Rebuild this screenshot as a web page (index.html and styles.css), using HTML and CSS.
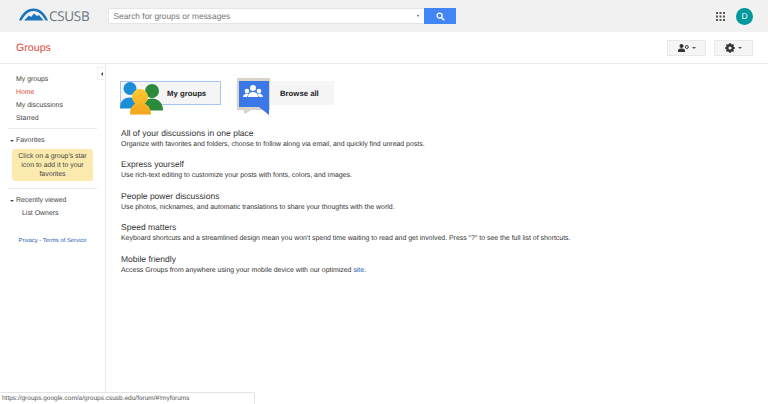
FILE: index.html
```html
<!DOCTYPE html>
<html lang="en">
<head>
    <meta charset="UTF-8">
    <title>Groups</title>
    <link rel="stylesheet" href="styles.css">
</head>
<body>
<div class="topbar">
    <div class="logo">
        <svg class="logo-mark" width="29" height="13" viewBox="0 0 29 13">
            <path d="M0 12.500C3 5 8 0.500 14.500 0.500S26 5 29 12.500h-2.500C23.500 7 19.500 3 14.500 3S5.500 7 2.500 12.500z" fill="#1c75bc"/>
            <path d="M5 12.500L10 7.500l2 1.500L15 5.500l3 2.500 2-1 4.500 5.500z" fill="#1c75bc"/>
        </svg>
        <span class="logo-text">CSUSB</span>
    </div>
    <div class="search">
        <div class="search-input">
            <span class="search-hint">Search for groups or messages</span>
            <span class="caret caret-small"></span>
        </div>
        <div class="search-btn">
            <svg width="9" height="9" viewBox="0 0 10 10"><circle cx="4" cy="4" r="2.800" fill="none" stroke="#fff" stroke-width="1.400"/><path d="M6 6l3.200 3.200" stroke="#fff" stroke-width="1.600"/></svg>
        </div>
    </div>
    <div class="top-right">
        <svg class="apps" width="9" height="9" viewBox="0 0 9 9" fill="#555">
            <rect width="2" height="2"/><rect x="3.500" width="2" height="2"/><rect x="7" width="2" height="2"/>
            <rect y="3.500" width="2" height="2"/><rect x="3.500" y="3.500" width="2" height="2"/><rect x="7" y="3.500" width="2" height="2"/>
            <rect y="7" width="2" height="2"/><rect x="3.500" y="7" width="2" height="2"/><rect x="7" y="7" width="2" height="2"/>
        </svg>
        <div class="avatar">D</div>
    </div>
</div>
<div class="subbar">
    <div class="page-title">Groups</div>
    <div class="tools">
        <div class="tool-btn">
            <svg width="11" height="8" viewBox="0 0 11 8" fill="#333"><circle cx="3.500" cy="2" r="2"/><path d="M0 8V6.500C0 5 2 4.500 3.500 4.500S7 5 7 6.500V8z"/><circle cx="8.800" cy="3" r="1.500" fill="none" stroke="#333"/></svg>
            <span class="caret"></span>
        </div>
        <div class="tool-btn">
            <svg width="10" height="10" viewBox="0 0 9 9"><circle cx="4.500" cy="4.500" r="2.500" fill="none" stroke="#333" stroke-width="2"/><path d="M4.500 0v9M0 4.500h9M1.300 1.300l6.400 6.400M7.700 1.300L1.300 7.700" stroke="#333" stroke-width="1.300"/><circle cx="4.500" cy="4.500" r="1.400" fill="#f5f5f5"/></svg>
            <span class="caret"></span>
        </div>
    </div>
</div>
<div class="main">
    <div class="sidebar">
        <div class="collapse"><span class="caret-left"></span></div>
        <ul class="nav">
            <li>My groups</li>
            <li class="active">Home</li>
            <li>My discussions</li>
            <li>Starred</li>
        </ul>
        <div class="side-section">
            <div class="side-head"><span class="caret"></span>Favorites</div>
            <div class="fav-note">Click on a group's star icon to add it to your favorites</div>
        </div>
        <div class="side-section">
            <div class="side-head"><span class="caret"></span>Recently viewed</div>
            <div class="side-item">List Owners</div>
            <div class="side-links">Privacy - Terms of Service</div>
        </div>
    </div>
    <div class="content">
        <div class="big-buttons">
            <div class="big-btn selected">
                <svg class="big-icon people" width="44" height="33" viewBox="0 0 44 33">
                    <defs>
                        <linearGradient id="yellowGrad" x1="0" y1="0" x2="0" y2="1"><stop offset="0" stop-color="#fdc92f"/><stop offset="1" stop-color="#f6a41c"/></linearGradient>
                    </defs>
                    <g fill="#1a8fd8"><circle cx="10" cy="6.500" r="6.500"/><path d="M0 26.500c0-7 3-11 10-11s10 4 10 11z"/></g>
                    <g fill="#2c8a3c"><circle cx="32" cy="9" r="7"/><path d="M22 28.500c0-7 3-12 10-12s11 5 11 12z"/></g>
                    <path d="M12 15a8 8 0 0 1 16 0c0 3-1.500 5.500-3.500 6.800C28.500 23 31 27 31 32.500H10c0-5.500 2-9.500 5.500-10.700C13.500 20.500 12 18 12 15z" fill="url(#yellowGrad)"/>
                </svg>
                <span class="big-label">My groups</span>
            </div>
            <div class="big-btn browse">
                <svg class="big-icon" width="34" height="38" viewBox="0 0 34 38">
                    <path d="M0 0h33v32H14l-6 4-2-4H0z" fill="#d8d4c8"/>
                    <path d="M2 3h30v34l-10-8H2z" fill="#3b78e7"/>
                    <g fill="#fff"><circle cx="16" cy="10" r="3"/><circle cx="10" cy="13" r="2.300"/><circle cx="22" cy="13" r="2.300"/><path d="M11 19c0-3 2-5 5-5s5 2 5 5z"/><path d="M6 19c0-2 2-3.500 4-3.500l1.500 0.500-1.500 3zM26 19c0-2-2-3.500-4-3.500l-1.500 0.500 1.500 3z"/></g>
                </svg>
                <span class="big-label">Browse all</span>
            </div>
        </div>
        <div class="feature">
            <h3>All of your discussions in one place</h3>
            <p>Organize with favorites and folders, choose to follow along via email, and quickly find unread posts.</p>
        </div>
        <div class="feature">
            <h3>Express yourself</h3>
            <p>Use rich-text editing to customize your posts with fonts, colors, and images.</p>
        </div>
        <div class="feature">
            <h3>People power discussions</h3>
            <p>Use photos, nicknames, and automatic translations to share your thoughts with the world.</p>
        </div>
        <div class="feature">
            <h3>Speed matters</h3>
            <p>Keyboard shortcuts and a streamlined design mean you won't spend time waiting to read and get involved. Press "?" to see the full list of shortcuts.</p>
        </div>
        <div class="feature">
            <h3>Mobile friendly</h3>
            <p>Access Groups from anywhere using your mobile device with our optimized <a class="link">site</a>.</p>
        </div>
    </div>
</div>
<div class="statusbar">https://groups.google.com/a/groups.csusb.edu/forum/#!myforums</div>
</body>
</html>
```

FILE: styles.css
```css
html, body {
    margin: 0;
    height: 100%;
    overflow: hidden;
}

body {
    display: flex;
    flex-direction: column;
    font-family: "Liberation Sans", Arial, sans-serif;
    font-size: 6.930px;
    text-rendering: geometricPrecision; /* keep small text at its true width */
    color: #222;
    background: #fff;
}

/* top grey bar */
.topbar {
    display: flex;
    align-items: center;
    height: 32px;
    background: #f1f1f1;
    flex-shrink: 0;
}

.logo {
    display: flex;
    align-items: center;
    gap: 1px;
    width: 89px;
    padding-left: 19px;
}

.logo-mark {
    margin-bottom: 3px;
}

.logo-text {
    font-family: "Open Sans", sans-serif;
    font-size: 13.500px;
    color: #6b7680;
    letter-spacing: -0.300px;
}

.search {
    display: flex;
    height: 16px;
}

.search-input {
    display: flex;
    align-items: center;
    justify-content: space-between;
    width: 316px;
    padding: 0 5px 0 4.500px;
    box-sizing: border-box;
    background: #fff;
    border: 1px solid #e5e5e5;
    border-right: 0;
}

.search-hint {
    font-size: 8.370px;
    color: #777;
}

.search-btn {
    display: flex;
    align-items: center;
    justify-content: center;
    width: 32px;
    background: #4285f4;
}

.top-right {
    display: flex;
    align-items: center;
    gap: 11px;
    margin-left: auto;
    padding-right: 15px;
}

.apps {
    display: block;
}

.avatar {
    width: 17px;
    height: 17px;
    line-height: 17px;
    border-radius: 50%;
    background: #00979d;
    color: #fff;
    text-align: center;
    font-size: 8.500px;
}

/* title row */
.subbar {
    display: flex;
    align-items: center;
    justify-content: space-between;
    height: 31px;
    padding: 0 15px 0 16px;
    border-bottom: 1px solid #ebebeb;
    flex-shrink: 0;
}

.page-title {
    font-size: 10.670px;
    color: #dd4b39;
}

.tools {
    display: flex;
    gap: 8px;
}

.tool-btn {
    display: flex;
    align-items: center;
    justify-content: center;
    gap: 3px;
    width: 39px;
    height: 16px;
    background: #f5f5f5;
    border: 1px solid #e8e8e8;
    box-sizing: border-box;
}

.caret {
    display: inline-block;
    width: 0;
    height: 0;
    border-left: 2px solid transparent;
    border-right: 2px solid transparent;
    border-top: 2px solid #555;
}

.caret-small {
    border-left-width: 1.500px;
    border-right-width: 1.500px;
}

.main {
    display: flex;
    flex: 1;
    min-height: 0;
}

/* left column */
.sidebar {
    position: relative;
    width: 105px;
    border-right: 1px solid #ebebeb;
    flex-shrink: 0;
}

.collapse {
    position: absolute;
    top: 3px;
    right: 0;
    display: flex;
    align-items: center;
    justify-content: center;
    width: 8px;
    height: 13px;
    background: #fff;
    border: 1px solid #f0f0f0;
    border-right: 0;
    box-sizing: border-box;
}

.caret-left {
    width: 0;
    height: 0;
    border-top: 2px solid transparent;
    border-bottom: 2px solid transparent;
    border-right: 2px solid #444;
}

.nav {
    list-style: none;
    margin: 0;
    padding: 8.500px 0 3.500px 16px;
    line-height: 13px;
    color: #444;
}

.nav .active {
    color: #dd4b39;
}

.side-section {
    margin: 0 8px;
    padding: 6px 0 7px;
    border-top: 1px solid #ebebeb;
}

.side-head {
    display: flex;
    align-items: center;
    gap: 2px;
    padding-left: 2px;
    line-height: 12px;
    color: #444;
}

.fav-note {
    margin: 2px 4px 0 4px;
    padding: 2.500px 3px;
    background: #fbeaae;
    border-radius: 3px;
    line-height: 9px;
    text-align: center;
    color: #444;
}

.side-item {
    padding-left: 14px;
    line-height: 13px;
    color: #444;
}

.side-links {
    margin-top: 17.500px;
    text-align: center;
    font-size: 5.870px;
    color: #2a5db0;
}

/* right column */
.content {
    flex: 1;
    padding: 17px 0 0 15px;
}

.big-buttons {
    display: flex;
    gap: 15px;
    height: 40px;
    margin: 0 0 6px -1px;
}

.big-btn {
    position: relative;
    display: flex;
    align-items: center;
    width: 101px;
    height: 24px;
    padding-left: 46px;
    box-sizing: border-box;
    background: #f5f5f5;
    border: 1px solid #f5f5f5;
}

.big-btn.selected {
    border-color: #a6c4f7;
}

.big-btn.browse {
    width: 98px;
    padding-left: 43px;
}

.big-icon {
    position: absolute;
    left: 0;
    top: -4px;
}

.people {
    left: -1px;
    top: 0;
}

.big-label {
    font-size: 7.750px;
    font-weight: bold;
    color: #222;
}

.feature {
    height: 31.400px;
}

.feature h3 {
    margin: 0;
    font-size: 8.530px;
    font-weight: normal;
    line-height: 13px;
    color: #333;
}

.feature p {
    margin: 0;
    font-size: 6.930px;
    line-height: 10px;
    color: #333;
}

.link {
    color: #2a5db0;
}

/* browser status url, sits over the page */
.statusbar {
    position: absolute;
    left: 0;
    bottom: 0;
    width: 255px;
    height: 12px;
    line-height: 12px;
    padding-left: 2px;
    box-sizing: border-box;
    background: #fff;
    border: 1px solid #e5e5e5;
    border-left: 0;
    border-bottom: 0;
    border-radius: 0 3px 0 0;
    font-size: 6.500px;
    color: #555;
}
```
